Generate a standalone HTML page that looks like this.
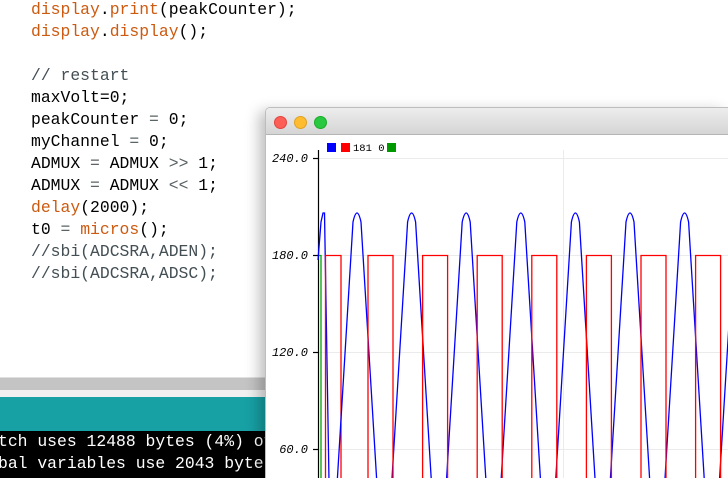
<!DOCTYPE html>
<html><head><meta charset="utf-8"><style>
html,body{margin:0;width:728px;height:478px;overflow:hidden}
body{background:#fff;position:relative;font-family:"Liberation Mono",monospace}
.code{position:absolute;left:31px;top:-1px;font-size:16.4px;line-height:22px;color:#000;white-space:pre}
.o{color:#cc5a10}.c{color:#434f54}.g{color:#5a6366}
.sb{position:absolute;left:0;top:377px;width:266px;height:13px;background:#c4c4c4;border-top:1px solid #e0e0e0}
.sb2{position:absolute;left:0;top:390px;width:266px;height:7px;background:#f0f0f0}
.teal{position:absolute;left:0;top:397px;width:266px;height:34px;background:#17a1a5}
.con{position:absolute;left:0;top:431px;width:266px;height:47px;background:#000;color:#fff;font-size:16.4px;line-height:22px;white-space:pre;overflow:hidden}
.win{position:absolute;left:265px;top:107px;width:463px;height:371px;background:#fff;border:1px solid #bdbdbd;border-bottom:none;border-right:none;border-radius:5px 0 0 0;box-shadow:-6px 4px 14px rgba(0,0,0,.25);overflow:hidden;box-sizing:border-box}
.tb{height:26px;background:linear-gradient(#ededed,#d5d5d5);border-bottom:1px solid #b5b5b5}
.d{position:absolute;top:8px;width:11px;height:11px;border-radius:50%}
</style></head><body>
<div class="code"><span class="o">display</span>.<span class="o">print</span>(peakCounter);
<span class="o">display</span>.<span class="o">display</span>();

<span class="c">// restart</span>
maxVolt=0;
peakCounter <span class="g">=</span> 0;
myChannel <span class="g">=</span> 0;
ADMUX <span class="g">=</span> ADMUX <span class="g">&gt;&gt;</span> 1;
ADMUX <span class="g">=</span> ADMUX <span class="g">&lt;&lt;</span> 1;
<span class="o">delay</span>(2000);
t0 <span class="g">=</span> <span class="o">micros</span>();
<span class="c">//sbi(ADCSRA,ADEN);</span>
<span class="c">//sbi(ADCSRA,ADSC);</span></div>
<div class="sb"></div><div class="sb2"></div><div class="teal"></div>
<div class="con"><span style="position:relative;left:-2px">tch uses 12488 bytes (4%) of
bal variables use 2043 bytes</span></div>
<div class="win"><div class="tb"></div>
<div class="d" style="left:8px;background:#fd5f57;border:1px solid #e0443e"></div>
<div class="d" style="left:28px;background:#febc2e;border:1px solid #dea123"></div>
<div class="d" style="left:48px;background:#28c840;border:1px solid #1aab29"></div>
</div>
<svg style="position:absolute;left:0;top:0;overflow:hidden" width="728" height="478">
<g stroke="#ebebeb" stroke-width="1">
<line x1="318" y1="158.5" x2="728" y2="158.5"/><line x1="318" y1="255.5" x2="728" y2="255.5"/>
<line x1="318" y1="352.5" x2="728" y2="352.5"/><line x1="318" y1="449.5" x2="728" y2="449.5"/>
<line x1="563.5" y1="150" x2="563.5" y2="478"/></g>
<g stroke="#000" stroke-width="1.2"><line x1="318.5" y1="150" x2="318.5" y2="478"/>
<line x1="313" y1="158.5" x2="318" y2="158.5"/><line x1="313" y1="255.5" x2="318" y2="255.5"/>
<line x1="313" y1="352.5" x2="318" y2="352.5"/><line x1="313" y1="449.5" x2="318" y2="449.5"/></g>
<g font-family="Liberation Mono,monospace" font-size="12" font-style="italic" text-anchor="end" fill="#000">
<text x="308" y="162">240.0</text><text x="308" y="259">180.0</text><text x="308" y="356">120.0</text><text x="308" y="453">60.0</text></g>
<rect x="327" y="143" width="9" height="9" fill="#0000ff"/><rect x="341" y="143" width="9" height="9" fill="#ff0000"/>
<text x="353" y="151" font-family="Liberation Mono,monospace" font-size="10.5" fill="#000">181 0</text>
<rect x="387" y="143" width="9" height="9" fill="#009900"/>
<path d="M319,255.5 H321 V478" stroke="#00a000" stroke-width="1.3" fill="none"/>
<defs>
<path id="bp" d="M-27,600 L-4,222 Q0,204 4,222 L27,600" fill="none" stroke="#0000ff" stroke-width="1.3"/>
<path id="rp" d="M11,600 V255.5 H36 V600" fill="none" stroke="#ff0000" stroke-width="1.3"/>
</defs>
<path d="M318,260 L321,222 L323,213 L324.5,213 L331,600" fill="none" stroke="#0000ff" stroke-width="1.3"/>
<path d="M325.5,600 V255.5 H341 V600" fill="none" stroke="#ff0000" stroke-width="1.3"/>
<use href="#bp" x="357"/><use href="#bp" x="411.6"/><use href="#bp" x="466.2"/><use href="#bp" x="520.8"/>
<use href="#bp" x="575.4"/><use href="#bp" x="630"/><use href="#bp" x="684.6"/><use href="#bp" x="739.2"/>
<use href="#rp" x="357"/><use href="#rp" x="411.6"/><use href="#rp" x="466.2"/><use href="#rp" x="520.8"/>
<use href="#rp" x="575.4"/><use href="#rp" x="630"/><use href="#rp" x="684.6"/>
</svg>
</body></html>
